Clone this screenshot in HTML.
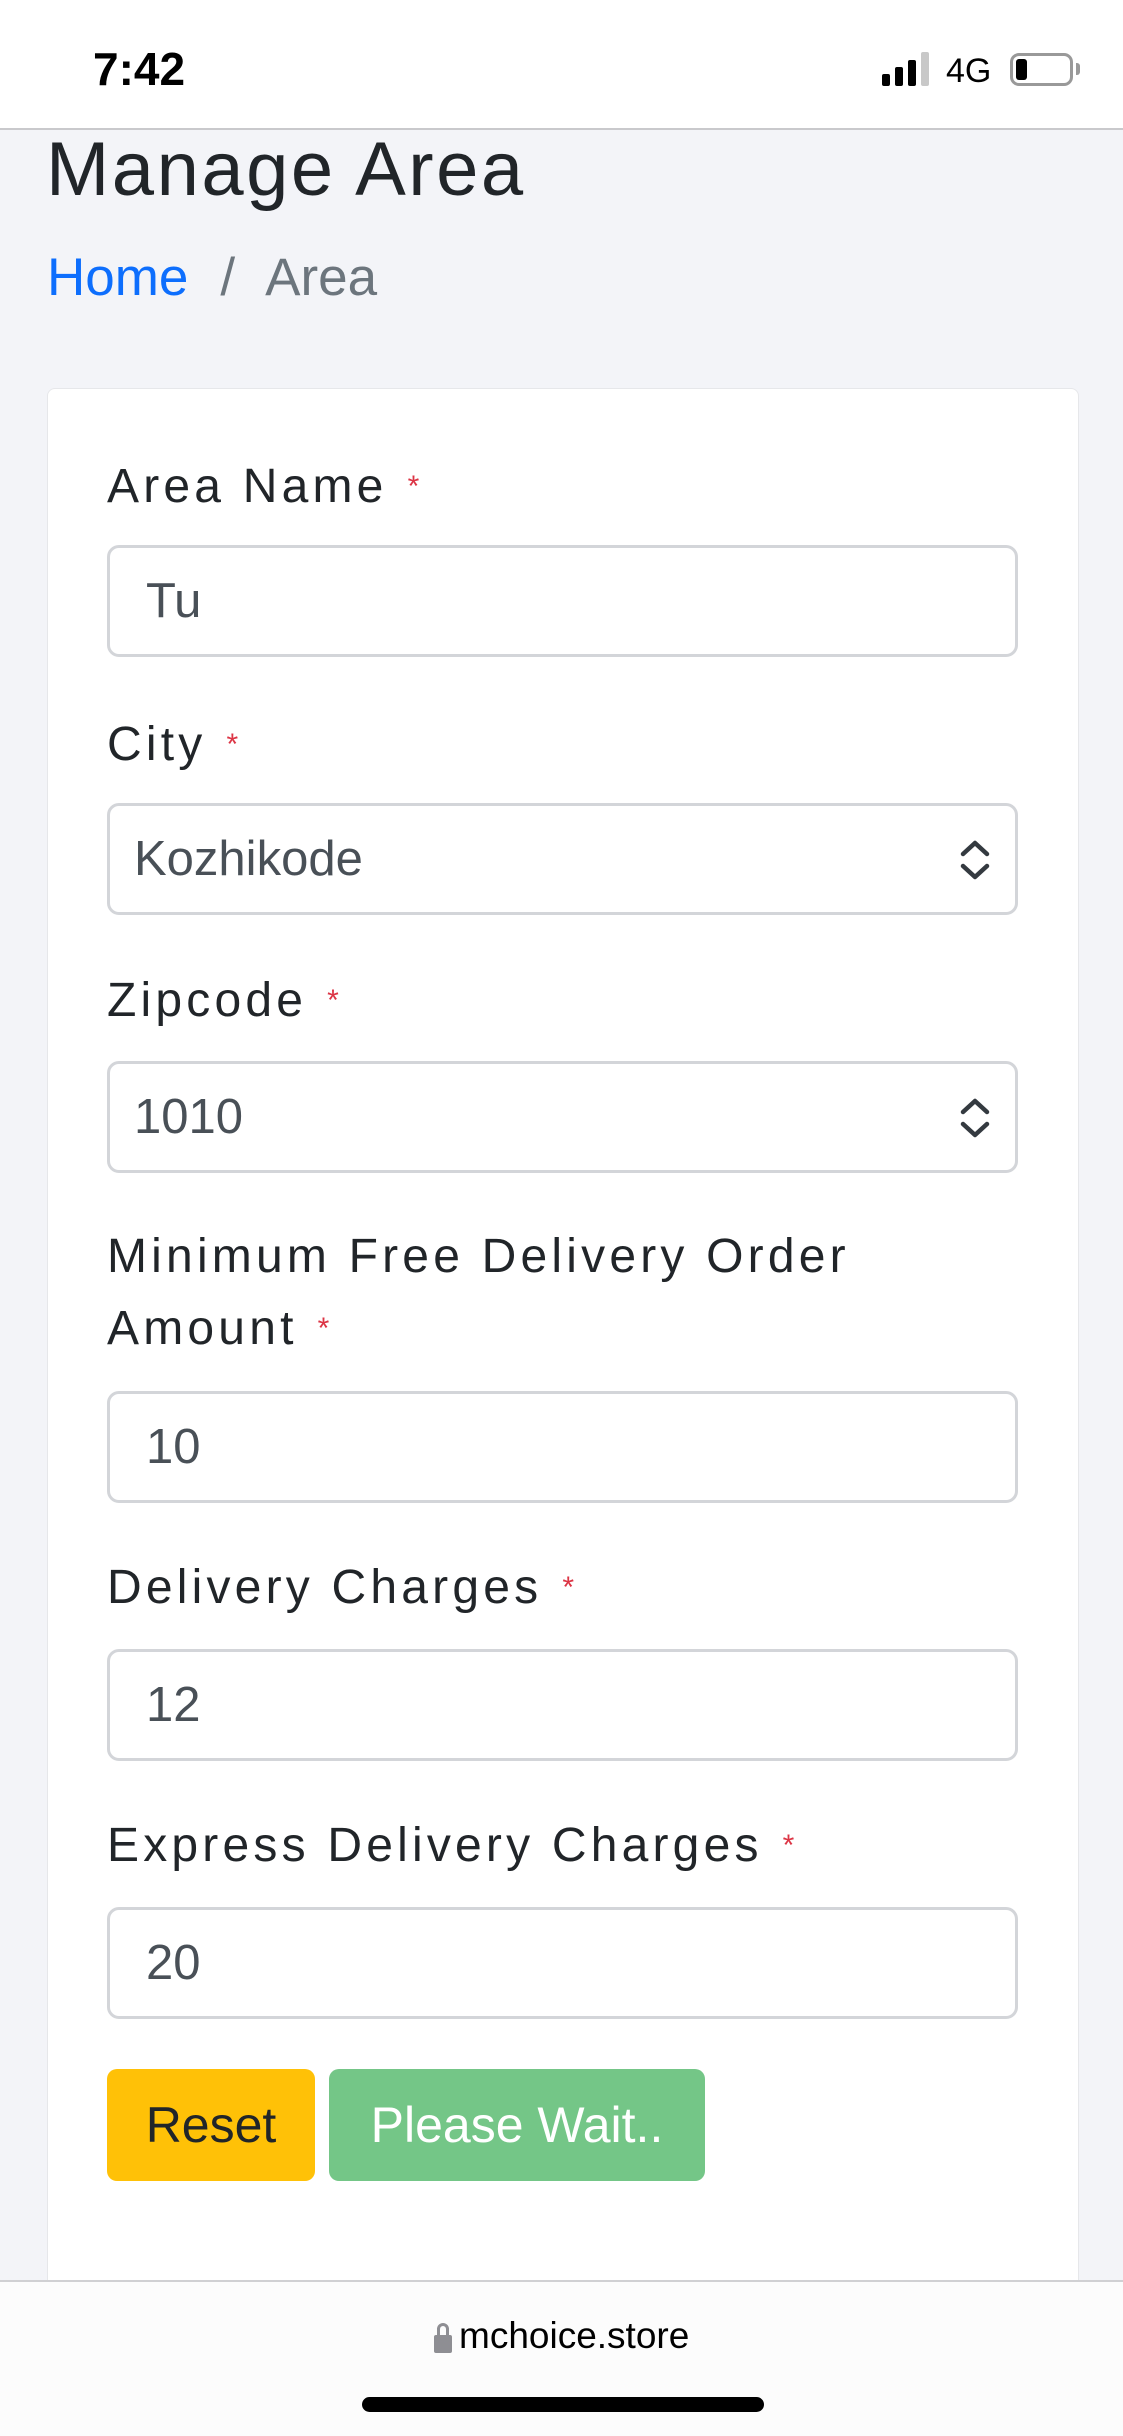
<!DOCTYPE html>
<html><head><meta charset="utf-8"><style>
*{margin:0;padding:0;box-sizing:border-box}
body{width:1123px;height:2436px;position:relative;background:#f3f4f8;font-family:"Liberation Sans",sans-serif;overflow:hidden}
.abs{position:absolute;white-space:nowrap}
.status{left:0;top:0;width:1123px;height:130px;background:#fff;border-bottom:2px solid #c9c9cc}
.card{left:47px;top:388px;width:1032px;height:1900px;background:#fff;border:1px solid #e6e7ea;border-radius:8px}
.lbl{left:107px;font-size:48px;line-height:48px;color:#212529;letter-spacing:4.2px}
.lbl b{color:#dc3545;font-weight:normal;font-size:30px;margin-left:20px;vertical-align:top;letter-spacing:0}
.inp{left:107px;width:911px;height:112px;background:#fff;border:3px solid #d3d5d9;border-radius:12px;font-size:49px;color:#495057;line-height:106px;padding-left:36px}
.sel{padding-left:24px}
.arr{position:absolute;right:22px;top:32px}
.btn{top:2069px;height:112px;border-radius:10px;font-size:50px;line-height:112px;text-align:center}
</style></head><body>
<div class="abs status"></div>
<div class="abs" style="left:93px;top:42px;font-size:46px;font-weight:bold;color:#000">7:42</div>
<div class="abs" style="left:882px;top:74px;width:8px;height:12px;background:#000;border-radius:2px"></div>
<div class="abs" style="left:895px;top:67px;width:8px;height:19px;background:#000;border-radius:2px"></div>
<div class="abs" style="left:908px;top:60px;width:8px;height:26px;background:#000;border-radius:2px"></div>
<div class="abs" style="left:921px;top:52px;width:8px;height:34px;background:#c8c8c8;border-radius:2px"></div>
<div class="abs" style="left:946px;top:52px;font-size:34px;color:#000">4G</div>
<div class="abs" style="left:1010px;top:53px;width:63px;height:33px;border:3px solid #999;border-radius:9px"></div>
<div class="abs" style="left:1016px;top:59px;width:11px;height:21px;background:#000;border-radius:3px"></div>
<div class="abs" style="left:1076px;top:63px;width:4px;height:12px;background:#999;border-radius:0 3px 3px 0"></div>

<div class="abs" style="left:46px;top:128px;font-size:76px;line-height:84px;color:#212529;letter-spacing:2.5px">Manage Area</div>
<div class="abs" style="left:47px;top:250px;font-size:53px;line-height:56px;color:#0d6efd">Home<span style="color:#6c757d;margin:0 30px 0 32px">/</span><span style="color:#6c757d">Area</span></div>

<div class="abs card"></div>

<div class="abs lbl" style="top:463px">Area Name<b>*</b></div>
<div class="abs inp" style="top:545px">Tu</div>

<div class="abs lbl" style="top:721px">City<b>*</b></div>
<div class="abs inp sel" style="top:803px">Kozhikode<svg class="arr" width="36" height="44" viewBox="0 0 36 44"><path d="M6 16 L18 5 L30 16 M6 28 L18 39 L30 28" fill="none" stroke="#343a40" stroke-width="4.5" stroke-linecap="round" stroke-linejoin="round"/></svg></div>

<div class="abs lbl" style="top:977px">Zipcode<b>*</b></div>
<div class="abs inp sel" style="top:1061px">1010<svg class="arr" width="36" height="44" viewBox="0 0 36 44"><path d="M6 16 L18 5 L30 16 M6 28 L18 39 L30 28" fill="none" stroke="#343a40" stroke-width="4.5" stroke-linecap="round" stroke-linejoin="round"/></svg></div>

<div class="abs lbl" style="top:1233px">Minimum Free Delivery Order</div>
<div class="abs lbl" style="top:1305px">Amount<b>*</b></div>
<div class="abs inp" style="top:1391px">10</div>

<div class="abs lbl" style="top:1564px">Delivery Charges<b>*</b></div>
<div class="abs inp" style="top:1649px">12</div>

<div class="abs lbl" style="top:1822px">Express Delivery Charges<b>*</b></div>
<div class="abs inp" style="top:1907px">20</div>

<div class="abs btn" style="left:107px;width:208px;background:#ffc107;color:#212529">Reset</div>
<div class="abs btn" style="left:329px;width:376px;background:#74c687;color:#fff">Please Wait..</div>

<div class="abs" style="left:0;top:2280px;width:1123px;height:156px;background:#fcfcfc;border-top:2px solid #d0d0d3"></div>
<div class="abs" style="left:434px;top:2323px;width:18px;height:30px;">
<div style="position:absolute;left:3px;top:0;width:12px;height:16px;border:3px solid #8e8e93;border-radius:6px 6px 0 0"></div>
<div style="position:absolute;left:0;top:12px;width:18px;height:18px;background:#8e8e93;border-radius:2px"></div></div>
<div class="abs" style="left:459px;top:2315px;font-size:37px;color:#000">mchoice.store</div>
<div class="abs" style="left:362px;top:2397px;width:402px;height:15px;background:#000;border-radius:8px"></div>
</body></html>
